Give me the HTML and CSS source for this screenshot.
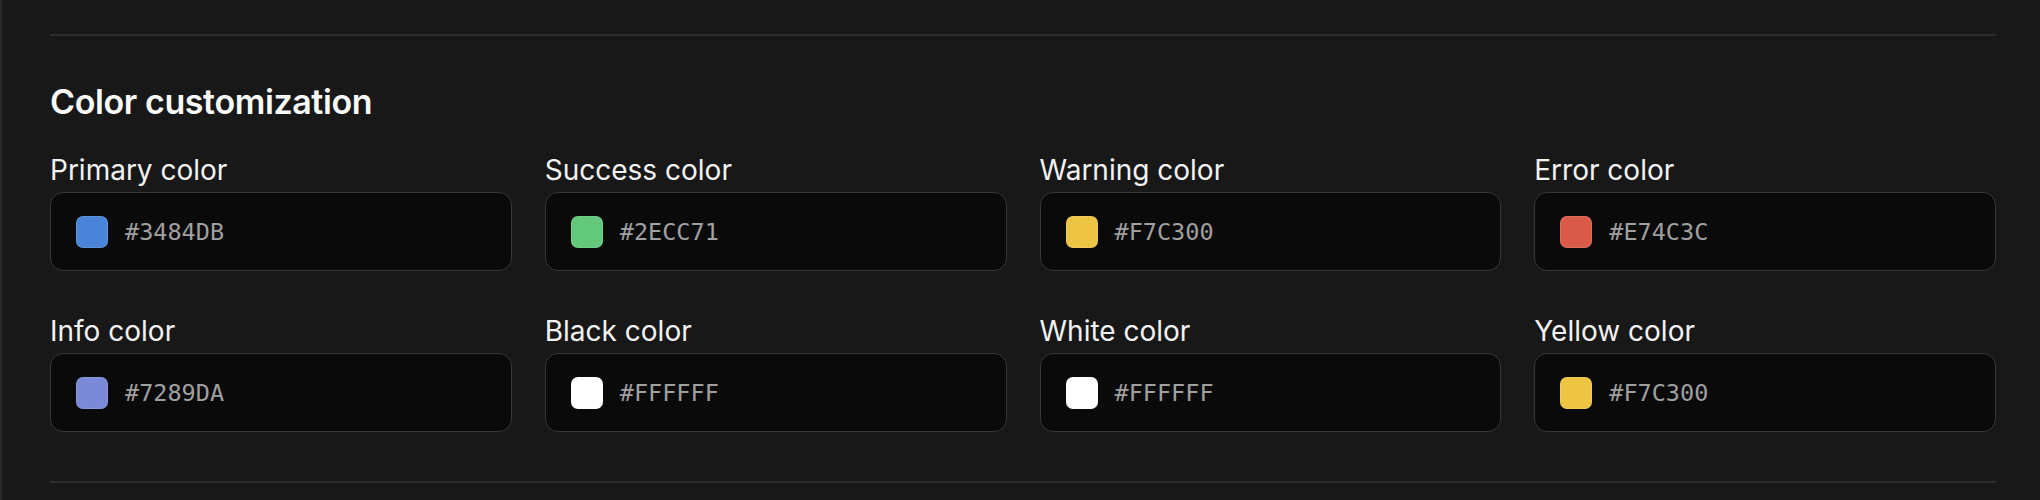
FILE: index.html
```html
<!DOCTYPE html>
<html lang="en">
<head>
<meta charset="utf-8">
<title>Color customization</title>
<link rel="stylesheet" href="styles.css">
</head>
<body>
<div class="page">
  <div class="divider"></div>
  <section class="section">
    <h2 class="title">Color customization</h2>
    <div class="grid">
      <div class="field">
        <div class="label">Primary color</div>
        <div class="input"><span class="swatch sw-primary"></span><span class="hex">#3484DB</span></div>
      </div>
      <div class="field">
        <div class="label">Success color</div>
        <div class="input"><span class="swatch sw-success"></span><span class="hex">#2ECC71</span></div>
      </div>
      <div class="field">
        <div class="label">Warning color</div>
        <div class="input"><span class="swatch sw-warning"></span><span class="hex">#F7C300</span></div>
      </div>
      <div class="field">
        <div class="label">Error color</div>
        <div class="input"><span class="swatch sw-error"></span><span class="hex">#E74C3C</span></div>
      </div>
      <div class="field">
        <div class="label">Info color</div>
        <div class="input"><span class="swatch sw-info"></span><span class="hex">#7289DA</span></div>
      </div>
      <div class="field">
        <div class="label">Black color</div>
        <div class="input"><span class="swatch sw-white"></span><span class="hex">#FFFFFF</span></div>
      </div>
      <div class="field">
        <div class="label">White color</div>
        <div class="input"><span class="swatch sw-white"></span><span class="hex">#FFFFFF</span></div>
      </div>
      <div class="field">
        <div class="label">Yellow color</div>
        <div class="input"><span class="swatch sw-warning"></span><span class="hex">#F7C300</span></div>
      </div>
    </div>
  </section>
  <div class="divider"></div>
</div>
</body>
</html>
```
FILE: styles.css
```css
html, body {
  margin: 0;
  padding: 0;
  background: #181818;
}

body {
  font-family: Inter, "Noto Sans", "Liberation Sans", sans-serif;
  color: #f5f5f5;
}

.page {
  box-sizing: border-box;
  min-height: 500px;
  border-left: 2px solid #2a2a2a;
  padding: 34px 44px 0 48px;
}

.divider {
  height: 2px;
  background: #2d2d2d;
}

.section {
  padding: 46px 0 49px;
}

.title {
  margin: 0 0 31px;
  font-size: 34px;
  line-height: 40px;
  font-weight: 600;
  letter-spacing: -0.4px;
  color: #fafafa;
}

.grid {
  display: grid;
  grid-template-columns: repeat(4, 1fr);
  column-gap: 33px;
  row-gap: 43px;
}

.label {
  font-size: 28px;
  line-height: 34px;
  font-weight: 400;
  color: #f2f2f2;
  margin-bottom: 5px;
}

.input {
  box-sizing: border-box;
  height: 79px;
  display: flex;
  align-items: center;
  gap: 17px;
  padding: 0 25px;
  background: #0a0a0a;
  border: 1.5px solid #383838;
  border-radius: 13px;
}

.swatch {
  flex: none;
  box-sizing: border-box;
  width: 32px;
  height: 32px;
  border-radius: 7px;
  border: 1px solid rgba(255, 255, 255, 0.12);
}

.sw-primary { background: #4a84d8; }
.sw-success { background: #62c97b; }
.sw-warning { background: #eec443; }
.sw-error { background: #d95c4b; }
.sw-info { background: #7a8ad8; }
.sw-white { background: #ffffff; }

.hex {
  font-family: "DejaVu Sans Mono", "Liberation Mono", monospace;
  font-size: 23.5px;
  line-height: 28px;
  color: #a0a0a0;
}
```
